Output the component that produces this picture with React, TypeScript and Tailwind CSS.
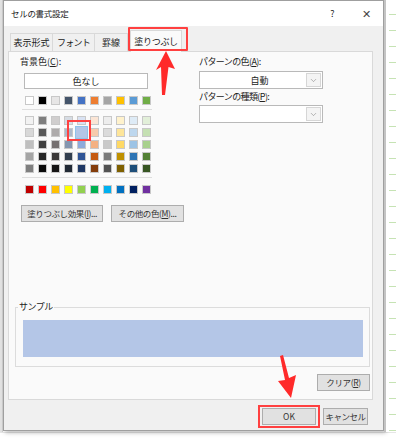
import { ChevronDown } from "lucide-react"

const themeRow = ["#ffffff", "#000000", "#e7e6e6", "#44546a", "#4472c4", "#ed7d31", "#a5a5a5", "#ffc000", "#5b9bd5", "#70ad47"]
const tintRows = [
  ["#f2f2f2", "#7f7f7f", "#d0cece", "#d6dce4", "#d9e2f3", "#fbe5d5", "#ededed", "#fff2cc", "#deebf6", "#e2efd9"],
  ["#d8d8d8", "#595959", "#aeabab", "#adb9ca", "#b4c6e7", "#f7cbac", "#dbdbdb", "#fee599", "#bdd7ee", "#c5e0b3"],
  ["#bfbfbf", "#3f3f3f", "#757070", "#8496b0", "#8eaadb", "#f4b183", "#c9c9c9", "#ffd965", "#9cc3e5", "#a8d08d"],
  ["#a5a5a5", "#262626", "#3a3838", "#323f4f", "#2f5496", "#c55a11", "#7b7b7b", "#bf9000", "#2e75b5", "#538135"],
  ["#7f7f7f", "#0c0c0c", "#171616", "#222a35", "#1f3864", "#833c0b", "#525252", "#7f6000", "#1e4e79", "#375623"],
]
const standardRow = ["#c00000", "#ff0000", "#ffc000", "#ffff00", "#92d050", "#00b050", "#00b0f0", "#0070c0", "#002060", "#7030a0"]

function Swatch({ color, selected }: { color: string; selected?: boolean }) {
  return (
    <div className="relative w-[9px] h-[9px] border border-[#c8c8c8]" style={{ background: color }}>
      {selected && (
        <div className="absolute -inset-[3px] border border-[#8ec3ea]" style={{ background: color }} />
      )}
    </div>
  )
}

function SwatchRow({ colors, selectedIndex }: { colors: string[]; selectedIndex?: number }) {
  return (
    <div className="flex gap-[4px]">
      {colors.map((c, i) => (
        <Swatch key={i} color={c} selected={i === selectedIndex} />
      ))}
    </div>
  )
}

function Select({ value }: { value?: string }) {
  return (
    <div className="flex h-[18px] w-[124px] border border-[#b9b9b9] bg-white">
      <div className="flex-1 flex items-center justify-center text-[9px] pl-[14px]">{value}</div>
      <div className="w-[15px] m-[1px] border border-[#d6d6d6] bg-[#f4f4f4] flex items-center justify-center">
        <ChevronDown size={9} strokeWidth={1.4} color="#777" />
      </div>
    </div>
  )
}

function Btn({ children, className }: { children: React.ReactNode; className?: string }) {
  return (
    <div className={"flex items-center justify-center bg-[#e1e1e1] border border-[#adadad] text-[8.5px] text-[#333] " + (className ?? "")}>
      {children}
    </div>
  )
}

function SheetStrip() {
  return (
    <div className="flex-1 h-full bg-white flex">
      <div className="w-[2px] h-full bg-[#c4c4c4]" />
      <div className="flex-1 flex flex-col pt-[14px] gap-[15px]">
        {Array.from({ length: 27 }).map((_, i) => (
          <div key={i} className="h-px bg-[#c6e3b4] ml-[3px]" />
        ))}
      </div>
    </div>
  )
}

export default function App() {
  return (
    <div className="relative w-[396px] h-[441px] bg-white overflow-hidden text-[#222] font-['Noto_Sans_CJK_JP','Noto_Sans',sans-serif] leading-none">
      <div className="flex h-[432px]">
        <div className="w-[3px] h-full bg-[#e2e2e2] border-r border-[#cfcfcf]" />
        <div className="w-[381px] h-[431px] flex flex-col bg-[#f0f0f0] border border-[#9f9f9f] shadow-[2px_2px_4px_rgba(0,0,0,0.25)]">
          {/* title bar */}
          <div className="h-[25px] bg-white flex items-center pl-[7px] pr-[12px] text-[8.5px] tracking-[-0.3px]">
            <span>セルの書式設定</span>
            <span className="ml-auto mr-[28px] text-[9px]">?</span>
            <span className="text-[11px] text-[#444]">✕</span>
          </div>

          {/* tabs */}
          <div className="flex items-end h-[25px] pl-[6px] text-[9px]">
            <div className="h-[18px] w-[43px] flex items-center justify-center border border-b-0 border-[#d9d9d9]">表示形式</div>
            <div className="h-[18px] w-[42px] flex items-center justify-center border border-b-0 border-l-0 border-[#d9d9d9] tracking-[-0.8px]">フォント</div>
            <div className="h-[18px] w-[33px] flex items-center justify-center border border-b-0 border-l-0 border-[#d9d9d9]">罫線</div>
            <div className="h-[22px] w-[52px] ml-[2px] flex items-center justify-center bg-[#fafafa] border border-b-0 border-[#d9d9d9] relative top-px tracking-[-0.3px]">塗りつぶし</div>
          </div>

          {/* panel */}
          <div className="ml-[4px] mr-[10px] h-[349px] bg-[#fafafa] border border-[#d9d9d9] flex flex-col">
            <div className="flex pl-[11px] pt-[5px]">
              <div className="w-[179px] flex flex-col">
                <div className="text-[9px] h-[12px]">背景色(<u>C</u>):</div>
                <div className="ml-[4px] mt-[4px] w-[124px] h-[16px] bg-white border border-[#b9b9b9] flex items-center justify-center text-[9px]">色なし</div>
                <div className="ml-[5px] mt-[7px]">
                  <SwatchRow colors={themeRow} />
                </div>
                <div className="ml-[2px] mt-[4px] w-[130px] h-px bg-[#dedede]" />
                <div className="ml-[5px] mt-[6px] flex flex-col gap-[3px]">
                  {tintRows.map((r, i) => (
                    <SwatchRow key={i} colors={r} selectedIndex={i === 1 ? 4 : undefined} />
                  ))}
                </div>
                <div className="ml-[2px] mt-[4px] w-[130px] h-px bg-[#dedede]" />
                <div className="ml-[5px] mt-[7px]">
                  <SwatchRow colors={standardRow} />
                </div>
                <div className="flex gap-[8px] mt-[11px] ml-px">
                  <Btn className="w-[82px] h-[17px] tracking-[-0.4px]">塗りつぶし効果(<u>I</u>)...</Btn>
                  <Btn className="w-[73px] h-[17px] tracking-[-0.4px]">その他の色(<u>M</u>)...</Btn>
                </div>
              </div>
              <div className="flex flex-col">
                <div className="text-[9px] h-[12px] tracking-[-0.6px]">パターンの色(<u>A</u>):</div>
                <div className="mt-[2px]">
                  <Select value="自動" />
                </div>
                <div className="text-[9px] h-[12px] mt-[3px] tracking-[-0.6px]">パターンの種類(<u>P</u>):</div>
                <div className="mt-[1px]">
                  <Select />
                </div>
              </div>
            </div>

            <div className="flex-1" />

            {/* sample group */}
            <div className="relative ml-[6px] mr-[2px] border border-[#dcdcdc] px-[7px] pr-[6px] pt-[12px] pb-[9px]">
              <div className="absolute -top-[6px] left-[2px] bg-[#fafafa] px-px text-[9px] tracking-[-0.5px]">サンプル</div>
              <div className="h-[37px] bg-[#b4c6e7]" />
            </div>
            <div className="flex justify-end mt-[7px] mr-[2px] mb-[8px]">
              <Btn className="w-[53px] h-[17px] tracking-[-0.4px]">クリア(<u>R</u>)</Btn>
            </div>
          </div>

          {/* footer buttons */}
          <div className="flex justify-end gap-[7px] mt-[8px] mr-[15px]">
            <Btn className="w-[54px] h-[17px] border-[#0078d7] border-[1.5px]">OK</Btn>
            <Btn className="w-[45px] h-[17px] tracking-[-0.5px]">キャンセル</Btn>
          </div>
        </div>
        <SheetStrip />
      </div>
      <div className="h-[9px] bg-white border-t border-[#e6e6e6]" />

      {/* red highlights */}
      <div className="absolute left-[128px] top-[27px] w-[60px] h-[24px] border-2 border-[#ff4040] rounded-[1px]" />
      <div className="absolute left-[67px] top-[120px] w-[24px] h-[21px] border-2 border-[#ff4040]" />
      <div className="absolute left-[258px] top-[405px] w-[62px] h-[23px] border-2 border-[#ff4040]" />

      {/* arrows */}
      <svg className="absolute inset-0 pointer-events-none" width="396" height="441" viewBox="0 0 396 441">
        <polygon points="166,51 175,69 168.5,67 165,95 162,95 161,67 156,70" fill="#ff2a2a" />
        <polygon points="280,356 283,355 289,378 296,375 291,398 278,381 285,380" fill="#ff2a2a" />
      </svg>
    </div>
  )
}
